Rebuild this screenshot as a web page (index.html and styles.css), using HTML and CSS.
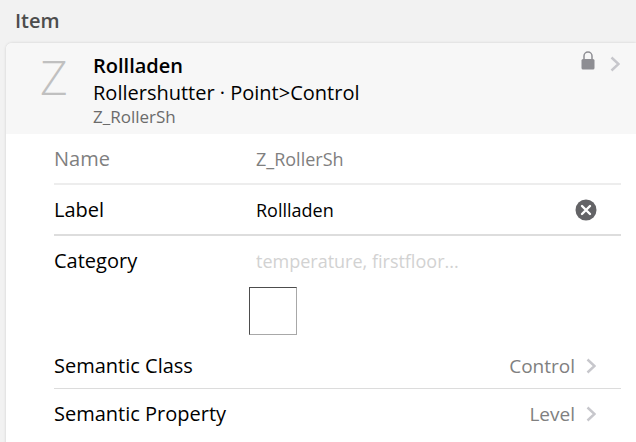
FILE: index.html
```html
<!DOCTYPE html>
<html lang="en">
<head>
  <meta charset="UTF-8" />
  <meta name="viewport" content="width=device-width, initial-scale=1.0" />
  <title>Rollladen</title>
  <link rel="stylesheet" href="styles.css">
</head>
<body>
  <h2 class="block-title">Item</h2>

  <main class="card">
    <a href="#" class="item-header">
      <span class="item-initial">Z</span>
      <span class="item-info">
        <strong class="item-label">Rollladen</strong>
        <span class="item-type">Rollershutter · Point&gt;Control</span>
        <span class="item-name">Z_RollerSh</span>
      </span>
      <svg class="lock" viewBox="0 0 14 20" aria-hidden="true">
        <path d="M3 9V5a4 4 0 0 1 8 0V9" fill="none" stroke="#8e8e93" stroke-width="1.5" />
        <rect x="0.5" y="8" width="13" height="10.5" rx="1.5" fill="#8e8e93" />
      </svg>
      <svg class="chevron" viewBox="0 0 10 16" aria-hidden="true">
        <path d="M1.5 1.5L8.5 8l-7 6.5" />
      </svg>
    </a>

    <form class="item-form">
      <div class="row disabled">
        <label for="name">Name</label>
        <input type="text" id="name" value="Z_RollerSh" disabled />
      </div>
      <div class="row">
        <label for="label">Label</label>
        <input type="text" id="label" value="Rollladen" />
        <button type="button" class="clear" aria-label="Clear">
          <svg viewBox="0 0 22 22" aria-hidden="true">
            <circle cx="11" cy="11" r="10.5" fill="#636366" />
            <path d="M7 7l8 8M15 7l-8 8" stroke="#fff" stroke-width="2.4" stroke-linecap="round" />
          </svg>
        </button>
      </div>
      <div class="row category">
        <label for="category">Category</label>
        <div class="category-input">
          <input type="text" id="category" placeholder="temperature, firstfloor..." />
          <div class="icon-preview"></div>
        </div>
      </div>
      <a href="#" class="link-row">
        <span>Semantic Class</span>
        <span class="after">Control</span>
        <svg class="chevron" viewBox="0 0 10 16" aria-hidden="true">
          <path d="M1.5 1.5L8.5 8l-7 6.5" />
        </svg>
      </a>
      <a href="#" class="link-row last">
        <span>Semantic Property</span>
        <span class="after">Level</span>
        <svg class="chevron" viewBox="0 0 10 16" aria-hidden="true">
          <path d="M1.5 1.5L8.5 8l-7 6.5" />
        </svg>
      </a>
    </form>
  </main>
</body>
</html>
```
FILE: styles.css
```css
* {
  box-sizing: border-box;
}

body {
  margin: 0;
  background: #f2f2f2;
  color: #000;
  font-family: "Open Sans", "Noto Sans", sans-serif;
  font-size: 20px;
  line-height: 24px;
  overflow: hidden;
}

a {
  color: inherit;
  text-decoration: none;
}

.block-title {
  margin: 0;
  padding: 9px 15px 10px;
  color: #4d4d4d;
  font-size: 20px;
  font-weight: 600;
}

.card {
  margin-left: 6px;
  background: #fff;
  border-radius: 6px 0 0 0;
  box-shadow: 0 0 3px rgba(0, 0, 0, 0.15);
  overflow: hidden;
}

.item-header {
  display: flex;
  align-items: flex-start;
  padding: 8px 16px 5px 34px;
  background: #f7f7f7;
}

.item-initial {
  width: 53px;
  color: #c0c0c0;
  font-size: 48px;
  font-weight: 300;
  line-height: 52px;
}

.item-info {
  flex: 1;
  display: flex;
  flex-direction: column;
}

.item-label {
  line-height: 30px;
  font-weight: 600;
}

.item-name {
  color: #6b6b6b;
  font-size: 17px;
}

.lock {
  width: 14px;
  height: 20px;
  margin-right: 15px;
}

.chevron {
  width: 10px;
  height: 16px;
  fill: none;
  stroke: #c7c7cc;
  stroke-width: 2.4;
}

.item-header .chevron {
  margin-top: 5px;
}

.item-form {
  padding: 0 15px 0 48px;
}

.row {
  display: flex;
  align-items: center;
  padding: 13px 0 12px;
  border-bottom: 2px solid #ddd;
}

.row label {
  width: 202px;
}

.row input {
  flex: 1;
  min-width: 0;
  height: 24px;
  padding: 0;
  border: 0;
  outline: 0;
  background: none;
  color: #000;
  font: inherit;
  font-size: 18px;
}

.disabled {
  border-bottom-color: #ededed;
}

.disabled label,
.disabled input {
  color: #7f7f7f;
}

.row input::placeholder {
  color: #d2d2d2;
  opacity: 1;
}

.clear {
  width: 22px;
  height: 22px;
  margin-right: 24px;
  padding: 0;
  border: 0;
  background: none;
  cursor: pointer;
}

.clear svg {
  display: block;
}

.category {
  align-items: flex-start;
  padding-bottom: 6px;
  border-bottom: 0;
}

.category-input {
  flex: 1;
}

.category-input input {
  display: block;
  width: 100%;
}

.icon-preview {
  width: 48px;
  height: 48px;
  margin: 14px 0 0 -7px;
  border: 1px solid;
  border-color: #4d4d4d #a8a8a8 #a8a8a8 #4d4d4d;
}

.link-row {
  display: flex;
  align-items: center;
  padding: 13px 25px 10px 0;
  border-bottom: 1px solid #dcdcdc;
}

.last {
  border-bottom: 0;
  padding-bottom: 20px;
}

.after {
  margin-left: auto;
  margin-right: 11px;
  color: #808080;
  font-size: 19px;
}
```
